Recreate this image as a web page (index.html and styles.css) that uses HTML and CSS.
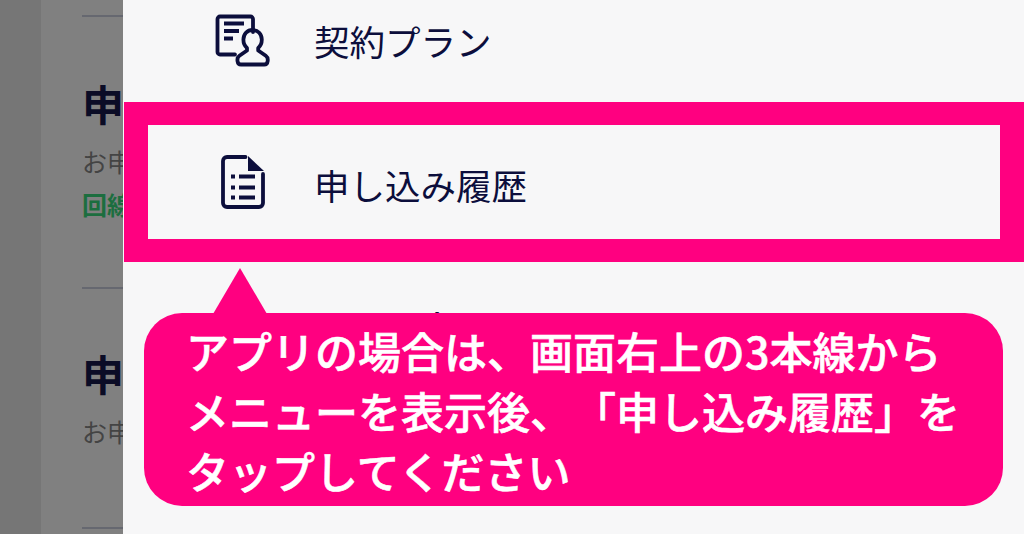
FILE: index.html
```html
<!DOCTYPE html>
<html lang="ja">
<head>
<meta charset="utf-8">
<title>申し込み履歴</title>
<link rel="stylesheet" href="styles.css">
</head>
<body>
<div class="screen">
  <div class="rail"></div>
  <main class="page">
    <section class="entry entry-first">
      <h2 class="entry-title">申</h2>
      <p class="entry-sub">お申</p>
      <p class="entry-status">回線</p>
    </section>
    <section class="entry entry-second">
      <h2 class="entry-title">申</h2>
      <p class="entry-sub">お申</p>
    </section>
    <section class="entry"></section>
  </main>
  <nav class="drawer">
    <div class="menu-row">
      <svg class="menu-icon" viewBox="0 0 56 54" width="56" height="54" aria-hidden="true">
        <path d="M38 18V5a2.500 2.500 0 0 0-2.500-2.500H5A2.500 2.500 0 0 0 2.500 5v33A2.500 2.500 0 0 0 5 40.500h15" fill="none" stroke="#0c0e3c" stroke-width="3.800" stroke-linecap="round"/>
        <path d="M9 9.500h20M9 17h15M9 24.500h9" fill="none" stroke="#0c0e3c" stroke-width="3.800"/>
        <path d="M37.500 16c5.500 0 9.300 4.200 9.300 9.600 0 3.600-1.400 6.600-3.600 8.400v2.500l7.600 5.300c3 2.100 2.600 8.700-1.600 8.700H26c-4.200 0-4.600-6.600-1.600-8.700l7.600-5.300V34c-2.200-1.800-3.600-4.800-3.600-8.400 0-5.400 3.700-9.600 9.100-9.600z" fill="none" stroke="#0c0e3c" stroke-width="3.800" stroke-linejoin="round"/>
      </svg>
      <span class="menu-label">契約プラン</span>
    </div>
    <div class="highlight">
      <div class="menu-row menu-row-active">
        <svg class="menu-icon-doc" viewBox="0 0 44 54" width="44" height="54" aria-hidden="true">
          <path d="M24.500 2H6a4 4 0 0 0-4 4v42a4 4 0 0 0 4 4h32a4 4 0 0 0 4-4V19" fill="none" stroke="#0c0e3c" stroke-width="3.800" stroke-linecap="round"/>
          <path d="M27 1l16 15H27z" fill="#0c0e3c"/>
          <path d="M10 21.500h4M10 32.500h4M10 42.500h4M18 21.500h16M18 32.500h16M18 42.500h16" fill="none" stroke="#0c0e3c" stroke-width="3.800"/>
        </svg>
        <span class="menu-label">申し込み履歴</span>
      </div>
    </div>
    <div class="menu-row menu-row-hidden">
      <span class="menu-label">お問い合わせ</span>
    </div>
    <aside class="callout">
      <p class="callout-text">アプリの場合は、画面右上の3本線から<br>メニューを表示後、「申し込み履歴」を<br>タップしてください</p>
    </aside>
  </nav>
</div>
</body>
</html>
```

FILE: styles.css
```css
* { box-sizing: border-box; }
html, body { margin: 0; padding: 0; height: 100%; }
body { font-family: "Noto Sans CJK JP", "Noto Sans", sans-serif; overflow: hidden; background: #808080; text-spacing-trim: space-all; }
.screen { display: flex; width: 1024px; height: 534px; overflow: hidden; }
.rail { flex: 0 0 41px; background: #767676; }
.page { flex: 0 0 82px; background: #808080; padding: 15px 0 0 41px; overflow: hidden; }
.entry { border-top: 2px solid #666870; width: 41px; overflow: hidden; }
.entry-first { height: 272px; padding-top: 56px; }
.entry-second { height: 240px; padding-top: 54px; }
.entry-title { margin: 0; font-size: 42px; line-height: 60px; font-weight: 700; color: #0b0c26; white-space: nowrap; }
.entry-sub { margin: 10px 0 0; font-size: 25px; line-height: 36px; color: #444; white-space: nowrap; }
.entry-status { margin: 7px 0 0; font-size: 25px; line-height: 36px; font-weight: 700; color: #1c6e3f; white-space: nowrap; }
.drawer { position: relative; flex: 1; background: #f7f7f8; display: flex; flex-direction: column; }
.menu-row { display: flex; align-items: center; height: 102px; padding: 0 0 20px 92px; }
.menu-icon { flex: 0 0 auto; margin-right: 43px; }
.menu-label { font-size: 35.500px; line-height: 50px; color: #0c0e3c; white-space: nowrap; }
.highlight { margin-left: 1px; border: 23px solid #ff0080; border-left-width: 24px; border-right-width: 24px; height: 160px; }
.menu-row-active { height: 114px; padding: 0 0 0 73px; }
.menu-row-active .menu-label { margin-top: 5px; }
.menu-icon-doc { flex: 0 0 auto; margin-right: 49px; }
.menu-row-hidden { height: 80px; padding: 40px 0 0 190px; align-items: flex-start; }
.callout { position: absolute; left: 21px; top: 313px; width: 859px; height: 193px; border-radius: 38px; background: #ff0080; padding: 7px 0 0 42px; }
.callout::before { content: ""; position: absolute; left: 69px; top: -45px; border-left: 27px solid transparent; border-right: 27px solid transparent; border-bottom: 46px solid #ff0080; }
.callout-text { margin: 0; font-size: 43px; line-height: 60px; font-weight: 500; color: #fff; -webkit-text-stroke: 0.6px #fff; white-space: nowrap; }
```
